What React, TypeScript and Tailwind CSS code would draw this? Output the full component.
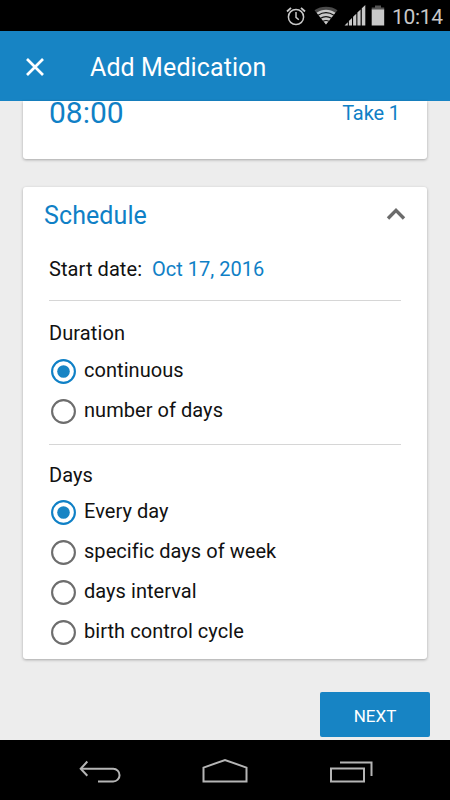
import { useState } from 'react';

type RadioRowProps = {
  label: string;
  checked: boolean;
  onSelect: () => void;
};

const durations = ['continuous', 'number of days'];
const days = ['Every day', 'specific days of week', 'days interval', 'birth control cycle'];

function RadioRow({ label, checked, onSelect }: RadioRowProps) {
  return (
    <button type="button" role="radio" aria-checked={checked} onClick={onSelect} className="flex h-10 items-center gap-2 pl-0.5 text-left">
      <svg width="25" height="25" viewBox="0 0 25 25" className="shrink-0">
        <circle cx="12.5" cy="12.5" r="11.4" fill="none" strokeWidth="2.1" stroke={checked ? '#0f80c6' : '#6d6d6d'} />
        {checked && <circle cx="12.5" cy="12.5" r="6.3" fill="#1784c4" />}
      </svg>
      <span className="-mt-[3px] whitespace-nowrap tracking-[0.05px]">{label}</span>
    </button>
  );
}

function StatusBar() {
  return (
    <div className="flex h-[31px] shrink-0 items-center bg-black pl-[286px] text-[#c8c8c8]">
      <svg width="20" height="20" viewBox="0 0 20 20" fill="none" stroke="currentColor" strokeWidth="1.5">
        <circle cx="10" cy="11" r="7.6" />
        <path d="M10 6V11.3L12.8 13.8" />
        <path d="M1 5.5L5 1.8M19 5.5L15 1.8" strokeWidth="1.8" />
      </svg>
      <svg width="24" height="20" viewBox="0 0 24 20" className="ml-2" fill="none">
        <path d="M12 18.5L0.5 4.2C7 -0.4 17 -0.4 23.5 4.2Z" fill="#4a4a4a" />
        <path d="M12 18.5L2.6 6.8C8 2.8 16 2.8 21.4 6.8Z" fill="currentColor" />
        <path d="M4 9.2C9 6 15 6 20 9.2M6.5 12.3C10 10.2 14 10.2 17.5 12.3M9 15.3C11 14.2 13 14.2 15 15.3" stroke="#111" strokeWidth="1.1" />
      </svg>
      <svg width="22" height="21" viewBox="0 0 22 21" className="ml-[6px]" fill="currentColor">
        <path d="M0.5 20.5L3.8 17.2V20.5ZM4.9 16L8 13V20.5H4.9ZM9.1 11.8L12.3 8.8V20.5H9.1ZM13.4 7.6L16.6 4.5V20.5H13.4ZM17.8 3.2L21.3 0V20.5H17.8Z" />
      </svg>
      <svg width="14" height="21" viewBox="0 0 14 21" className="ml-[5px]">
        <path d="M4 0.5H10V2.5H13.2V5H0.7V2.5H4Z" fill="#555" />
        <path d="M0.7 4.5H13.2V20.5H0.7Z" fill="currentColor" />
      </svg>
      <span className="ml-[7px] pt-[3px] text-[21px] leading-none tracking-[-0.3px]">10:14</span>
    </div>
  );
}

function NavBar() {
  return (
    <div className="flex h-[60px] shrink-0 items-start bg-black pl-[79px] pt-[18px] text-[#b5b5b5]">
      <svg width="42" height="26" viewBox="0 0 42 26" fill="none" stroke="currentColor" strokeWidth="2">
        <path d="M2 10.8H34.2A6.3 6.3 0 0 1 34.2 23.5H19" />
        <path d="M8.3 3.5L1.7 10.8L8.3 17.8" />
      </svg>
      <svg width="47" height="26" viewBox="0 0 47 26" className="ml-[80px]" fill="none" stroke="currentColor" strokeWidth="2">
        <path d="M2.5 23.5V9.6L24 2L45.5 9.6V23.5Z" />
      </svg>
      <svg width="44" height="26" viewBox="0 0 44 26" className="ml-[81px]" fill="none" stroke="currentColor" strokeWidth="2">
        <path d="M2 10.6H35V23.5H2Z" />
        <path d="M11 4.5H42.5V18" />
      </svg>
    </div>
  );
}

export default function App() {
  const [duration, setDuration] = useState('continuous');
  const [day, setDay] = useState('Every day');

  return (
    <div className="flex h-[800px] w-[450px] flex-col overflow-hidden bg-[#ededed] font-[Roboto,sans-serif] text-xl text-[#111]">
      <StatusBar />

      <header className="flex h-[70px] shrink-0 items-center bg-[#1784c4] pl-[26px] pt-px text-white">
        <svg width="18" height="18" viewBox="0 0 18 18" fill="none" stroke="currentColor" strokeWidth="2.7">
          <path d="M1 1L17 17M17 1L1 17" />
        </svg>
        <h1 className="ml-[46px] pt-[3px] text-[25px] leading-8 tracking-[0.1px]">Add Medication</h1>
      </header>

      <main className="flex flex-1 flex-col px-[23px]">
        <section className="flex h-[58px] items-start justify-between rounded-b-[3px] bg-white pl-[26px] pr-[27px] text-[#0f80c6] shadow-[0_1px_3px_rgba(0,0,0,0.3)]">
          <span className="-mt-1 text-[30px] leading-[32px]">08:00</span>
          <span className="leading-6 tracking-[-0.1px]">Take 1</span>
        </section>

        <section className="mt-[28px] h-[472px] rounded-[3px] bg-white pl-[26px] pr-[26px] shadow-[0_1px_3px_rgba(0,0,0,0.3)]">
          <div className="-ml-[5px] flex h-[58px] items-center justify-between">
            <h2 className="text-[25px] leading-8 tracking-[0.1px] text-[#0f80c6]">Schedule</h2>
            <svg width="20" height="14" viewBox="0 0 20 14" className="-mr-[5px] -mt-1" fill="none" stroke="#6b6b6b" strokeWidth="3.4">
              <path d="M2 11.5L10 3.4L18 11.5" />
            </svg>
          </div>

          <div className="flex h-[56px] gap-[10px] border-b border-[#d6d6d6] pt-[10px] leading-7">
            <span className="tracking-[0.08px]">Start date:</span>
            <span className="text-[#0f80c6]">Oct 17, 2016</span>
          </div>

          <div role="radiogroup" aria-label="Duration" className="h-[144px] border-b border-[#d6d6d6] pt-[18px]">
            <h3 className="h-8 leading-7 tracking-[0.1px]">Duration</h3>
            {durations.map((item) => (
              <RadioRow key={item} label={item} checked={duration === item} onSelect={() => setDuration(item)} />
            ))}
          </div>

          <div role="radiogroup" aria-label="Days" className="pt-4">
            <h3 className="h-[31px] leading-7 tracking-[0.1px]">Days</h3>
            {days.map((item) => (
              <RadioRow key={item} label={item} checked={day === item} onSelect={() => setDay(item)} />
            ))}
          </div>
        </section>

        <button type="button" className="-mr-[3px] mt-[33px] h-[45px] w-[110px] self-end rounded-[2px] bg-[#1784c4] pt-1 text-[17px] text-white">
          NEXT
        </button>
      </main>

      <NavBar />
    </div>
  );
}
